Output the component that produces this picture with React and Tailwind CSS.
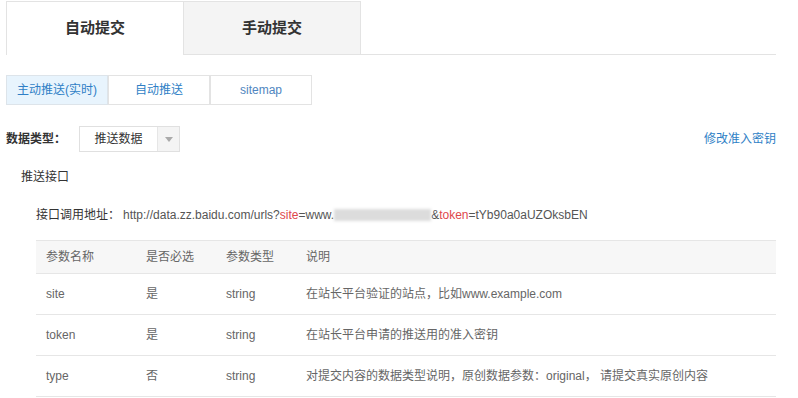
import React from "react";

const font = { fontFamily: '"Liberation Sans", Arial, "Noto Sans CJK SC", sans-serif' };

function Row({ name, req, type, desc }) {
  return (
    <div className="flex h-[41px] items-center border-b border-[#e6e6e6] text-[12px] text-[#666]">
      <div className="w-[100px] pl-[10px]">{name}</div>
      <div className="w-[80px] pl-[10px]">{req}</div>
      <div className="w-[80px] pl-[10px]">{type}</div>
      <div className="flex-1 pl-[10px]">{desc}</div>
    </div>
  );
}

export default function App() {
  return (
    <div className="w-[798px] h-[398px] bg-white overflow-hidden" style={font}>
      <div className="ml-[6px] w-[770px]">
        {/* main tabs */}
        <div className="mt-[1px] flex h-[54px]">
          <div className="flex w-[177px] items-center justify-center border-t border-l border-[#e3e3e3] bg-white text-[15px] font-bold text-[#333]">
            自动提交
          </div>
          <div className="flex w-[178px] items-center justify-center border border-[#e3e3e3] bg-[#f4f4f4] text-[15px] font-bold text-[#333]">
            手动提交
          </div>
          <div className="flex-1 border-b border-[#e3e3e3]"></div>
        </div>

        {/* sub tabs */}
        <div className="mt-[20px] flex h-[30px] text-[12px]">
          <div className="flex w-[102px] items-center justify-center border border-[#dde4ea] bg-[#e8f4fd] text-[#2f7fc6]">
            主动推送(实时)
          </div>
          <div className="flex w-[102px] items-center justify-center border border-[#e3e3e3] bg-white text-[#2f7fc6]">
            自动推送
          </div>
          <div className="flex w-[102px] items-center justify-center border border-[#e3e3e3] bg-white text-[#4f86c0]">
            sitemap
          </div>
        </div>

        {/* data type row */}
        <div className="mt-[21px] flex h-[26px] items-center justify-between">
          <div className="flex items-center">
            <span className="w-[73px] text-[12px] font-bold text-[#333]">数据类型：</span>
            <div className="flex h-[26px] w-[101px] border border-[#e0e0e0]">
              <div className="flex w-[77px] items-center justify-center text-[12px] text-[#333]">推送数据</div>
              <div className="flex flex-1 items-center justify-center border-l border-[#e6e6e6] bg-[#f4f4f4]">
                <svg width="8" height="5" viewBox="0 0 8 5">
                  <path d="M0 0 L8 0 L4 5 Z" fill="#aaa" />
                </svg>
              </div>
            </div>
          </div>
          <span className="text-[12px] text-[#2f7fc6]">修改准入密钥</span>
        </div>

        {/* push interface */}
        <div className="mt-[15px] flex h-[20px] items-center pl-[15px] text-[12px] text-[#333]">推送接口</div>

        <div className="mt-[18px] flex h-[20px] items-center pl-[30px] text-[12px] text-[#555]">
          <span className="text-[#333]">接口调用地址：</span>
          <span className="ml-[3px] flex items-center">
            http://data.zz.baidu.com/urls?<span className="text-[#e0474c]">site</span>=www.
            <span className="inline-block h-[12px] w-[97px] bg-[#dcdcdc] blur-[1.5px]"></span>
            &amp;<span className="text-[#e0474c]">token</span>=tYb90a0aUZOksbEN
          </span>
        </div>

        {/* table */}
        <div className="ml-[30px] mt-[15px] w-[740px]">
          <div className="flex h-[34px] items-center border-t border-b border-[#e6e6e6] bg-[#f7f7f7] text-[12px] text-[#666]">
            <div className="w-[100px] pl-[10px]">参数名称</div>
            <div className="w-[80px] pl-[10px]">是否必选</div>
            <div className="w-[80px] pl-[10px]">参数类型</div>
            <div className="flex-1 pl-[10px]">说明</div>
          </div>
          <Row name="site" req="是" type="string" desc="在站长平台验证的站点，比如www.example.com" />
          <Row name="token" req="是" type="string" desc="在站长平台申请的推送用的准入密钥" />
          <Row name="type" req="否" type="string" desc="对提交内容的数据类型说明，原创数据参数：original， 请提交真实原创内容" />
        </div>
      </div>
    </div>
  );
}
